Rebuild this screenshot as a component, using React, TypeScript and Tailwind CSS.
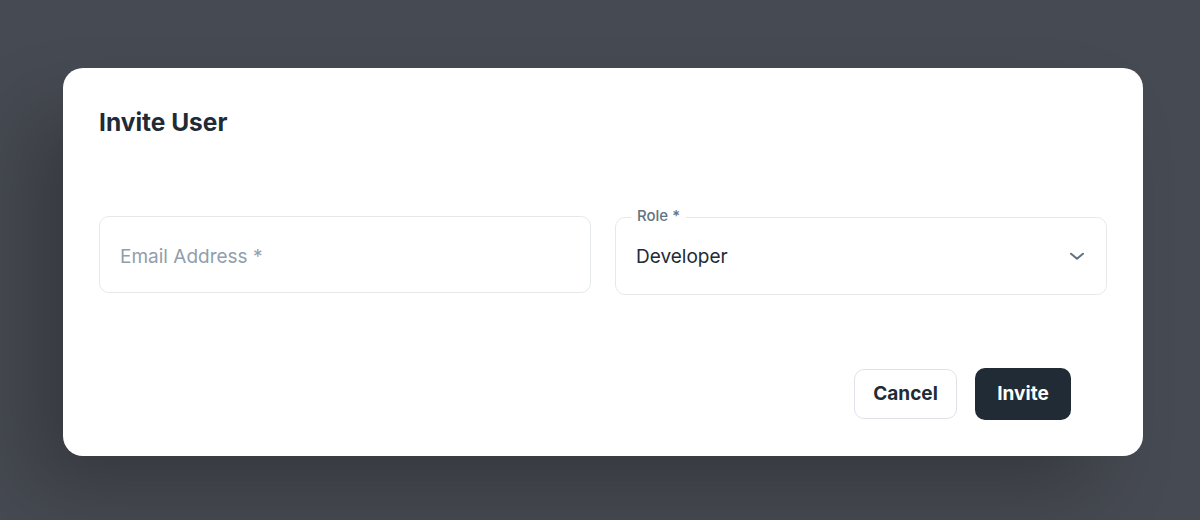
import React from "react";

export default function App() {
  return (
    <div
      className="w-[1200px] h-[520px] overflow-hidden bg-[#464a52] pt-[68px]"
      style={{ fontFamily: "Inter, 'Noto Sans', sans-serif" }}
    >
      <div className="ml-[63px] w-[1080px] h-[388px] rounded-[20px] bg-white px-9 pt-[38px] shadow-[-40px_40px_80px_-8px_rgba(0,0,0,0.24)] flex flex-col">
        <h2 className="text-[24.5px] leading-[32px] font-bold text-[#212b36]">
          Invite User
        </h2>
        <div className="mt-[78px] grid grid-cols-2 gap-6 items-start">
          <div className="h-[77px] rounded-[10px] border border-[#e6e9ec] flex items-center px-5 pt-[5px]">
            <span className="text-[19px] text-[#919eab]">Email Address *</span>
          </div>
          <div className="relative mt-px h-[78px] rounded-[10px] border border-[#e6e9ec] flex items-center pl-5 pr-[18px]">
            <span className="absolute -top-[11px] left-[15px] bg-white px-[6px] text-[15px] leading-[18px] font-medium text-[#637381]">
              Role *
            </span>
            <span className="flex-1 pt-[2px] text-[19px] text-[#212b36]">Developer</span>
            <svg width="22" height="22" viewBox="0 0 24 24" fill="none">
              <path
                d="M5.5 9.5l6.5 5.5 6.5-5.5"
                stroke="#637381"
                strokeWidth="2.2"
                strokeLinecap="round"
                strokeLinejoin="round"
              />
            </svg>
          </div>
        </div>
        <div className="mt-[73px] flex items-center justify-end gap-[18px] pr-9">
          <button className="h-[50px] w-[103px] rounded-[10px] border border-[#dfe3e8] bg-white pt-px text-[19px] font-bold text-[#212b36]">
            Cancel
          </button>
          <button className="h-[52px] w-[96px] rounded-[10px] bg-[#212b36] pt-px text-[19px] font-bold text-white">
            Invite
          </button>
        </div>
      </div>
    </div>
  );
}
